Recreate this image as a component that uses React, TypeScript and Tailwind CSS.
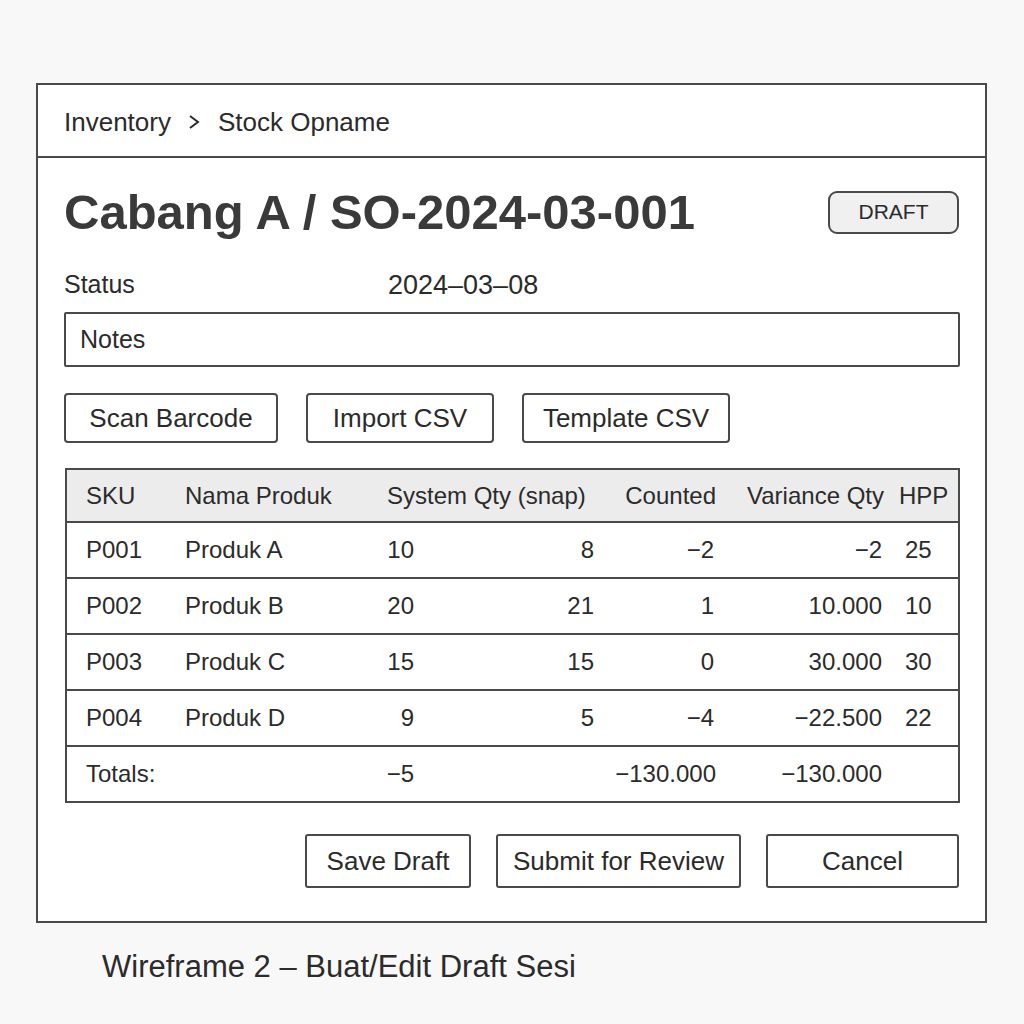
import React from "react";

const rows = [
  ["P001", "Produk A", "10", "8", "\u22122", "\u22122", "25"],
  ["P002", "Produk B", "20", "21", "1", "10.000", "10"],
  ["P003", "Produk C", "15", "15", "0", "30.000", "30"],
  ["P004", "Produk D", "9", "5", "\u22124", "\u221222.500", "22"],
];

const grid = "grid grid-cols-[110px_202px_46px_180px_120px_168px_1fr] items-center";

export default function App() {
  return (
    <div
      className="min-h-[1024px] w-[1024px] bg-[#f8f8f8] text-[#2b2b2b] pt-[83px] pl-[36px]"
      style={{ fontFamily: '"Liberation Sans", Arial, sans-serif' }}
    >
      <div className="w-[951px] h-[840px] border-2 border-[#4a4a4a] bg-white flex flex-col">
        {/* Header */}
        <div className="h-[73px] border-b-2 border-[#4a4a4a] flex items-center pl-[26px] pt-[3px] text-[26px]">
          <span>Inventory</span>
          <svg width="12" height="16" viewBox="0 0 12 16" className="ml-[17px] mr-[18px]">
            <path d="M2 2 L10 8 L2 14" fill="none" stroke="#2b2b2b" strokeWidth="2" />
          </svg>
          <span>Stock Opname</span>
        </div>

        <div className="flex flex-col pl-[26px] pr-[25px]">
          {/* Title row */}
          <div className="mt-[33px] h-[42px] flex items-center justify-between">
            <h1 className="text-[49px] font-bold text-[#3a3a3a] leading-none">Cabang A / SO-2024-03-001</h1>
            <div className="w-[131px] h-[43px] mr-[1px] rounded-[9px] border-2 border-[#4a4a4a] bg-[#f0f0f0] flex items-center justify-center text-[21px]">
              DRAFT
            </div>
          </div>

          {/* Status */}
          <div className="mt-[37px] h-[30px] flex items-center text-[25px]">
            <span className="w-[324px]">Status</span>
            <span className="text-[27px]">2024&#8211;03&#8211;08</span>
          </div>

          {/* Notes */}
          <div className="mt-[12px] h-[55px] border-2 border-[#4a4a4a] rounded-[2px] flex items-center pl-[14px] text-[25px]">
            Notes
          </div>

          {/* Action buttons */}
          <div className="mt-[26px] flex gap-[28px] text-[26px]">
            <button className="w-[214px] h-[50px] border-2 border-[#4a4a4a] rounded-[4px] bg-white">Scan Barcode</button>
            <button className="w-[188px] h-[50px] border-2 border-[#4a4a4a] rounded-[4px] bg-white">Import CSV</button>
            <button className="w-[208px] h-[50px] border-2 border-[#4a4a4a] rounded-[4px] bg-white">Template CSV</button>
          </div>

          {/* Table */}
          <div className="mt-[25px] ml-[1px] border-2 border-[#4a4a4a] text-[24px]">
            <div className={`${grid} h-[53px] bg-[#ececec] border-b-2 border-[#4a4a4a]`}>
              <div className="pl-[19px]">SKU</div>
              <div className="pl-[8px]">Nama Produk</div>
              <div className="col-span-2 pl-[8px]">System Qty (snap)</div>
              <div className="text-right pr-[9px]">Counted</div>
              <div className="text-right pr-[9px]">Variance Qty</div>
              <div className="pl-[6px]">HPP</div>
            </div>
            {rows.map((r) => (
              <div key={r[0]} className={`${grid} h-[56px] border-b-2 border-[#4a4a4a]`}>
                <div className="pl-[19px]">{r[0]}</div>
                <div className="pl-[8px]">{r[1]}</div>
                <div className="text-right pr-[11px]">{r[2]}</div>
                <div className="text-right pr-[11px]">{r[3]}</div>
                <div className="text-right pr-[11px]">{r[4]}</div>
                <div className="text-right pr-[11px]">{r[5]}</div>
                <div className="pl-[12px]">{r[6]}</div>
              </div>
            ))}
            <div className={`${grid} h-[54px]`}>
              <div className="pl-[19px] col-span-2">Totals:</div>
              <div className="text-right pr-[11px]">&minus;5</div>
              <div></div>
              <div className="text-right pr-[9px]">&minus;130.000</div>
              <div className="text-right pr-[11px]">&minus;130.000</div>
              <div></div>
            </div>
          </div>

          {/* Bottom buttons */}
          <div className="mt-[31px] flex justify-end gap-[25px] pr-[1px] text-[26px]">
            <button className="w-[166px] h-[54px] border-2 border-[#4a4a4a] rounded-[3px] bg-white">Save Draft</button>
            <button className="w-[245px] h-[54px] border-2 border-[#4a4a4a] rounded-[3px] bg-white">Submit for Review</button>
            <button className="w-[193px] h-[54px] border-2 border-[#4a4a4a] rounded-[3px] bg-white">Cancel</button>
          </div>
        </div>
      </div>

      <div className="mt-[26px] pl-[66px] text-[31px] leading-[36px]">Wireframe 2 &ndash; Buat/Edit Draft Sesi</div>
    </div>
  );
}
